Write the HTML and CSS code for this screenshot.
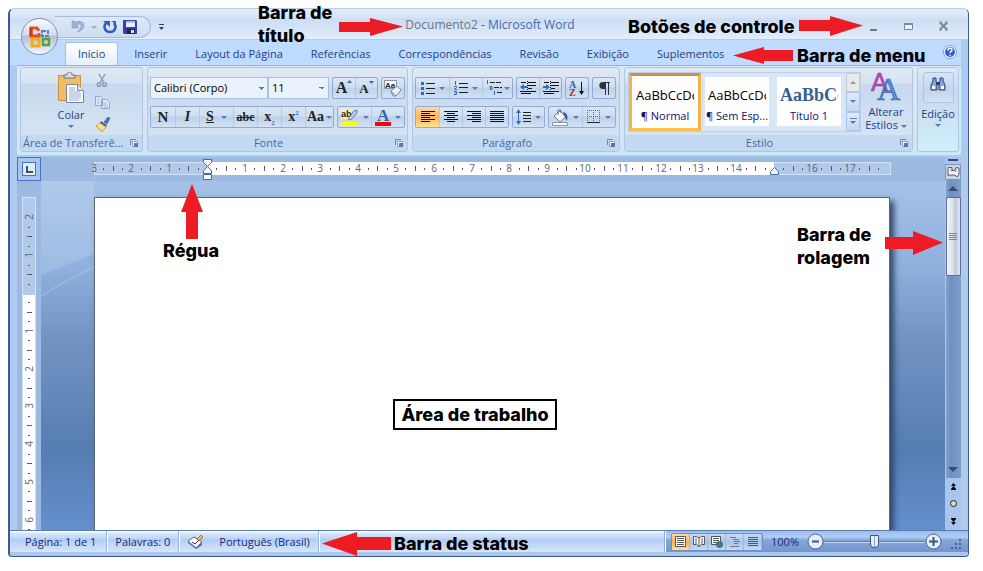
FILE: index.html
```html
<!DOCTYPE html>
<html lang="pt-BR">
<head>
<meta charset="utf-8">
<title>Documento2 - Microsoft Word</title>
<link rel="stylesheet" href="styles.css">
</head>
<body>
<div class="window">
  <header class="titlebar">
    <div class="quick-area">
    <div class="quick">
      <button aria-label="Desfazer"><svg width="14" height="14" viewBox="0 0 14 14"><path d="M1 1v7h6V6H5c2-3 6-2 5 1-1 2-2 3-4 5 5-1 7-4 7-7 0-4-6-5-9-2V1z" fill="#9db1d3" stroke="#8399c2" stroke-width=".5"/></svg></button>
      <i class="caret dim"></i>
      <button aria-label="Refazer"><svg width="14" height="14" viewBox="0 0 14 14"><path d="M3 3C0 7 2 12 7 12s7-5 4-9" fill="none" stroke="#2b5fc0" stroke-width="2.600"/><path d="M0 1h7v6z" fill="#2b5fc0"/><path d="M8 1h5v3z" fill="#2b5fc0"/></svg></button>
      <button aria-label="Salvar"><svg width="14" height="14" viewBox="0 0 14 14"><path d="M0 0h13l1 1v13H1l-1-1z" fill="#3c3fa5"/><path d="M3 1h9v6H3z" fill="#e8f0ff"/><path d="M3 1h9v2H3z" fill="#a8bdf0"/><path d="M4 9h8v5H4z" fill="#1f2350"/><path d="M8 10h3v3H8z" fill="#dde4f5"/></svg></button>
    </div>
    <button class="quick-more" aria-label="Personalizar"><svg width="7" height="7" viewBox="0 0 7 7"><path d="M1 0h5v1H1zM1 3h5L3.500 6z" fill="#24427a"/></svg></button>
    </div>
    <h1><span>Documento2</span> - Microsoft Word</h1>
    <div class="controls">
      <button aria-label="Minimizar"><svg width="9" height="10" viewBox="0 0 9 10"><path d="M1 8h7v2H1z" fill="#6f7680"/></svg></button>
      <button aria-label="Maximizar"><svg width="9" height="10" viewBox="0 0 9 10"><path d="M.5 2.500h8v6h-8z" fill="#eef4fb" stroke="#7d8794"/><path d="M0 2h9v2H0z" fill="#7d8794"/></svg></button>
      <button aria-label="Fechar"><svg width="9" height="10" viewBox="0 0 9 10"><path d="M1 1.500l7 7M8 1.500l-7 7" stroke="#7d8794" stroke-width="2"/><path d="M0 1h3M6 1h3M0 9h3M6 9h3" stroke="#7d8794"/></svg></button>
    </div>
  </header>
  <button class="office" aria-label="Botão Office">
    <svg width="24" height="24" viewBox="0 0 24 24" fill="none"><path d="M10 3H3v8h3M10 3v3M6 11h5V8" stroke="#e2521a" stroke-width="3"/><path d="M3 3v8" stroke="#c93b16" stroke-width="3"/><path d="M14 6h6v5h-6z" stroke="#4d83cf" stroke-width="2" stroke-dasharray="4 1"/><path d="M4 14h7v7H4z" stroke="#f3ac18" stroke-width="3"/><path d="M15 14h6v6h-6z" stroke="#55a33c" stroke-width="2.500"/></svg>
  </button>
  <nav class="tabs" aria-label="Menu">
    <button class="active">Início</button><button>Inserir</button><button>Layout da Página</button><button>Referências</button><button>Correspondências</button><button>Revisão</button><button>Exibição</button><button>Suplementos</button>
    <button class="help" aria-label="Ajuda"><svg width="14" height="14" viewBox="0 0 14 14"><circle cx="7" cy="7" r="6.500" fill="#fff" stroke="#7c97cc"/><circle cx="7" cy="7" r="5" fill="#2963d3"/><path d="M5 5.500c0-3 4-3 4-.5 0 1.500-2 1.500-2 3M7 9.500v1.300" stroke="#fff" stroke-width="1.500" fill="none"/></svg></button>
  </nav>
  <section class="ribbon">
    <div class="group clip">
      <div class="body">
        <button class="big">
          <svg width="28" height="32" viewBox="0 0 28 32"><path d="M1.500 3.500h22v25h-22z" fill="#efbd68" stroke="#c99245"/><path d="M7 6V3h3c0-4 5-4 5 0h3v3z" fill="#d9dde3" stroke="#6d747d"/><path d="M9.500 12.500h11l6 6v12h-17z" fill="#fff" stroke="#7486a8"/><path d="M20.500 12.500v6h6" fill="#dce6f5" stroke="#7486a8"/><path d="M12 16h6M12 18h6M12 20h11M12 22h12M12 24h12M12 26h12M12 28h10" stroke="#9badd0"/></svg>
          <span>Colar</span><i class="caret"></i>
        </button>
        <div class="stack">
          <button aria-label="Recortar"><svg width="15" height="15" viewBox="0 0 15 15" fill="none" stroke="#8c9fbf" stroke-width="1.500"><path d="M4 1l5 9M10 1L5 10"/><circle cx="4" cy="11.500" r="1.800"/><circle cx="9.500" cy="11.500" r="1.800"/></svg></button>
          <button aria-label="Copiar"><svg width="15" height="13" viewBox="0 0 15 13"><path d="M.5.500h5l2 2v7h-7zM6.500 3.500h5l3 3v6h-8z" fill="#e3ebf8" stroke="#92a6cb"/><path d="M2 3h3M2 5h3M2 7h3M8 7h4M8 9h5M8 11h5" stroke="#a9b9d8"/></svg></button>
          <button aria-label="Pincel"><svg width="16" height="15" viewBox="0 0 16 15"><path d="M9 5l4-5 2 1-3 6z" fill="#4d6fb6" stroke="#31508c" stroke-width=".5"/><path d="M6 4l6 4-1 2-6-4z" fill="#555d78"/><path d="M5 6l6 4-4 5-6-6z" fill="#f3d47a" stroke="#b38b33" stroke-width=".7"/><path d="M3 8l5 4M4 7l5 4" stroke="#fff2ad"/></svg></button>
        </div>
      </div>
      <footer><span>Área de Transferê...</span><svg class="launch" viewBox="0 0 8 8"><use href="#launcher"/></svg></footer>
    </div>
    <div class="group font">
      <div class="body rows">
        <div class="row">
          <div class="combos"><select aria-label="Fonte" class="family"><option>Calibri (Corpo)</option></select><select aria-label="Tamanho" class="size"><option>11</option></select></div>
          <div class="set"><button aria-label="Aumentar fonte" class="serif grow">A<svg width="5" height="3" viewBox="0 0 5 3"><path d="M0 3h5L2.500 0z" fill="#3768b5"/></svg></button><button aria-label="Diminuir fonte" class="serif shrink">A<svg width="5" height="3" viewBox="0 0 5 3"><path d="M0 0h5L2.500 3z" fill="#3768b5"/></svg></button></div>
          <div class="set"><button aria-label="Limpar formatação"><svg width="18" height="17" viewBox="0 0 18 17"><path d="M.5.500h12v8H.5z" fill="#fff" stroke="#8795ad"/><text x="1" y="8" font-family="Liberation Sans" font-size="8" font-weight="bold" fill="#222">Aa</text><path d="M7 11l6-5 4 4-5 6H9z" fill="#eef1f7" stroke="#7888a6"/><path d="M7 11l5 5" stroke="#7888a6"/></svg></button></div>
        </div>
        <div class="row">
          <div class="set fmt"><button class="serif"><b>N</b></button><button class="serif"><em>I</em></button><button class="serif wide"><u>S</u><i class="caret"></i></button><button class="serif small"><s>abc</s></button><button class="serif"><span>x<sub>2</sub></span></button><button class="serif"><span>x<sup>2</sup></span></button><button class="serif case">Aa<i class="caret"></i></button></div>
          <div class="set"><button class="wide" aria-label="Realce"><svg width="18" height="18" viewBox="0 0 18 18"><path d="M0 1h11v10H0z" fill="#fff29a"/><text x="0" y="9" font-family="Liberation Sans" font-size="9" font-weight="bold" fill="#222">ab</text><path d="M7 11l6-8 3-1v3l-6 7z" fill="#b9cde9" stroke="#526a96" stroke-width=".8"/><path d="M0 14h16v4H0z" fill="#ff0"/></svg><i class="caret"></i></button><button class="wide" aria-label="Cor da fonte"><svg width="16" height="18" viewBox="0 0 16 18"><text x="2" y="13" font-family="Liberation Serif" font-size="17" font-weight="bold" fill="#3662a7">A</text><path d="M0 14h16v4H0z" fill="red"/></svg><i class="caret"></i></button></div>
        </div>
      </div>
      <footer><span>Fonte</span><svg class="launch" viewBox="0 0 8 8"><use href="#launcher"/></svg></footer>
    </div>
    <div class="group para">
      <div class="body rows">
        <div class="row">
          <div class="set lists">
            <button class="wide" aria-label="Marcadores"><svg width="14" height="13" viewBox="0 0 14 13"><path d="M5 1.500h9M5 6.500h9M5 11.500h9" stroke="#222"/><path d="M0 0h3v3H0zM0 5h3v3H0zM0 10h3v3H0z" fill="#3b66b2"/></svg><i class="caret"></i></button><button class="wide" aria-label="Numeração"><svg width="14" height="14" viewBox="0 0 14 14"><path d="M5 2.500h9M5 6.500h9M5 11.500h9" stroke="#222"/><path d="M1.500 0v4M0 5.500h2.500v1L.5 8.500H3M0 10.500h2.500v3H0M1 12h1" fill="none" stroke="#3b66b2"/></svg><i class="caret"></i></button><button class="wide" aria-label="Vários níveis"><svg width="16" height="16" viewBox="0 0 16 16"><path d="M4 2.500h12M8 7.500h8M11 12.500h5" stroke="#222" stroke-dasharray="5 1"/><path d="M1.500 0v4M4 6.500h2v3H4.500zM8.500 11v4" fill="none" stroke="#3b66b2"/></svg><i class="caret"></i></button></div>
          <div class="set">
            <button aria-label="Diminuir recuo"><svg width="16" height="14" viewBox="0 0 16 14"><path d="M1 1.500h5M8 1.500h8M8 4.500h8M8 7.500h4M0 10.500h16M1 12.500h10" stroke="#111"/><path d="M7.500 0v14" stroke="#111" stroke-dasharray="1 1"/><path d="M0 6l4-3v2h3v2H4v2z" fill="#3969bd"/></svg></button><button aria-label="Aumentar recuo"><svg width="16" height="14" viewBox="0 0 16 14"><path d="M1 1.500h5M8 1.500h8M8 4.500h8M8 7.500h4M0 10.500h16M1 12.500h10" stroke="#111"/><path d="M7.500 0v14" stroke="#111" stroke-dasharray="1 1"/><path d="M7 6L3 3v2H0v2h3v2z" fill="#3969bd"/></svg></button></div>
          <div class="set"><button aria-label="Classificar"><svg width="16" height="17" viewBox="0 0 16 17"><text x="0" y="8" font-family="Liberation Serif" font-size="10" font-weight="bold" fill="#3662a7">A</text><text x="0" y="16" font-family="Liberation Serif" font-size="10" font-weight="bold" fill="#a3342e">Z</text><path d="M12.500 2v11" stroke="#111"/><path d="M10 11h5l-2.500 4z" fill="#111"/></svg></button></div>
          <div class="set"><button aria-label="Mostrar marcas"><svg width="11" height="13" viewBox="0 0 11 13"><path d="M5 .5h6M6.500 0v13M9.500 0v13" stroke="#2b3140"/><path d="M6 0H4c-5 0-5 7 0 7h2z" fill="#2b3140"/></svg></button></div>
        </div>
        <div class="row">
          <div class="set align"><button class="on" aria-label="À esquerda"><svg width="14" height="12" viewBox="0 0 14 12"><path d="M0 .5h14M0 2.500h9M0 4.500h14M0 6.500h9M0 8.500h14M0 10.500h9" stroke="#111"/></svg></button><button aria-label="Centralizar"><svg width="14" height="12" viewBox="0 0 14 12"><path d="M0 .5h14M3 2.500h8M0 4.500h14M3 6.500h8M0 8.500h14M3 10.500h8" stroke="#111"/></svg></button><button aria-label="À direita"><svg width="14" height="12" viewBox="0 0 14 12"><path d="M0 .5h14M5 2.500h9M0 4.500h14M5 6.500h9M0 8.500h14M5 10.500h9" stroke="#111"/></svg></button><button aria-label="Justificar"><svg width="14" height="12" viewBox="0 0 14 12"><path d="M0 .5h14M0 2.500h14M0 4.500h14M0 6.500h14M0 8.500h14M0 10.500h14" stroke="#111"/></svg></button></div>
          <div class="set"><button class="spacing" aria-label="Espaçamento"><svg width="15" height="16" viewBox="0 0 15 16"><path d="M7 3.500h8M7 6.500h8M7 9.500h8M7 12.500h8" stroke="#222"/><path d="M2.500 3v10" stroke="#3969bd"/><path d="M0 4h5L2.500 0zM0 12h5l-2.500 4z" fill="#3969bd"/></svg><i class="caret"></i></button></div>
          <div class="set"><button class="wide" aria-label="Sombreamento"><svg width="17" height="17" viewBox="0 0 17 17"><path d="M2 7l6-5 6 6-6 5z" fill="#f5f7fb" stroke="#67758f"/><path d="M6 6V1h3v3" fill="none" stroke="#67758f"/><path d="M11 3c5 1 5 5 4 9l-3-5z" fill="#3a63ad"/><path d="M.5 13.500h15v3H.5z" fill="#fff" stroke="#8a94a6"/></svg><i class="caret"></i></button><button class="wide" aria-label="Bordas"><svg width="14" height="14" viewBox="0 0 14 14"><path d="M0 .5h13M0 6.500h13M.5 0v12M6.500 0v12M12.500 0v12" stroke="#56668a" stroke-dasharray="1 1"/><path d="M0 12.500h13" stroke="#222"/></svg><i class="caret"></i></button></div>
        </div>
      </div>
      <footer><span>Parágrafo</span><svg class="launch" viewBox="0 0 8 8"><use href="#launcher"/></svg></footer>
    </div>
    <div class="group styles">
      <div class="body">
        <div class="gallery">
          <button class="style chosen"><span class="sample">AaBbCcDc</span><span>¶ Normal</span></button>
          <button class="style"><span class="sample">AaBbCcDc</span><span>¶ Sem Esp...</span></button>
          <button class="style"><span class="sample heading">AaBbCc</span><span>Título 1</span></button>
          <div class="spin"><button class="off" aria-label="Acima"><i class="caret up"></i></button><button aria-label="Abaixo"><i class="caret"></i></button><button aria-label="Mais"><i class="bar"></i><i class="caret"></i></button></div>
        </div>
        <button class="big change"><svg width="30" height="29" viewBox="0 0 30 29"><text x="0" y="19" font-family="Liberation Sans" font-size="25" fill="#bd4fb8" stroke="#8d3791" stroke-width=".6">A</text><text x="6" y="28" font-family="Liberation Serif" font-size="32" fill="#5b91d9" stroke="#315fa7" stroke-width=".7">A</text></svg><span>Alterar</span><span>Estilos <i class="caret"></i></span></button>
      </div>
      <footer><span>Estilo</span><svg class="launch" viewBox="0 0 8 8"><use href="#launcher"/></svg></footer>
    </div>
    <div class="group edit">
      <button class="big"><span class="tile"><svg width="16" height="15" viewBox="0 0 16 15"><path d="M3 1h3v3l1 2v7H1V8l2-4zM10 1h3v3l2 4v5H9V6l1-2z" fill="#8ca7d4" stroke="#26427c"/><path d="M6 5h4v3H6z" fill="#26427c"/><path d="M2 9h3v3H2zM11 9h3v3h-3z" fill="#fff"/></svg></span><span>Edição</span><i class="caret"></i></button>
    </div>
  </section>
  <main class="workspace">
    <button class="tabstop" aria-label="Tabulação"><span><svg width="7" height="7" viewBox="0 0 7 7"><path d="M1 0v6h6" fill="none" stroke="#40506f" stroke-width="2"/></svg></span></button>
    <div class="hruler"><svg id="hruler" width="797" height="24" viewBox="0 0 797 24"></svg></div>
    <div class="vruler"><svg id="vruler" width="14" height="340" viewBox="0 0 14 340"></svg></div>
    <div class="canvas"><svg class="swoosh" viewBox="0 0 53 120" width="53" height="120"><path d="M0 0H53V73Q25 84 0 94z" fill="#cfe0f5" opacity=".25"/><path d="M0 115Q25 99 53 86" stroke="#b5cdef" fill="none" opacity=".7"/></svg><article class="page"><p>Área de trabalho</p></article></div>
    <div class="scroll">
      <i class="split"></i>
      <button class="toggle" aria-label="Régua"><svg width="13" height="12" viewBox="0 0 13 12"><path d="M1 9.500v-8h4v3h3l1-3 3 .5v6l-2 3-2-2H3z" fill="#f7f9fd" stroke="#505b75"/><path d="M3 3l2 3M8 6l2-3" stroke="#505b75" stroke-dasharray="1 1"/></svg></button>
      <div class="track"><button aria-label="Acima"><i class="arrow up"></i></button><div class="thumb"></div><button class="down" aria-label="Abaixo"><i class="arrow"></i></button></div>
      <div class="browse">
        <button aria-label="Página anterior"><svg width="7" height="7" viewBox="0 0 7 7"><path d="M1 3h5L3.500 0zM1 6h5L3.500 3zM1 6h5v1H1z"/></svg></button>
        <button aria-label="Procurar"><svg width="7" height="7" viewBox="0 0 7 7"><circle cx="3.500" cy="3.500" r="3" fill="#ddd6c8" stroke="#222"/></svg></button>
        <button aria-label="Próxima página"><svg width="7" height="7" viewBox="0 0 7 7"><path d="M1 0h5v1H1zM1 1h5L3.500 4zM1 4h5L3.500 7z"/></svg></button>
      </div>
    </div>
  </main>
  <footer class="status">
    <span class="cell first">Página: 1 de 1</span><span class="cell">Palavras: 0</span>
    <span class="cell"><svg width="17" height="15" viewBox="0 0 17 15"><path d="M1 7l6-4 8 5-6 6z" fill="#fff" stroke="#56678d"/><path d="M1 8l8 6 6-5v2l-6 4-8-6z" fill="#4565a8"/><path d="M5 8l3 2 7-7" fill="none" stroke="#333"/><path d="M10 5l4-4 2 2-4 4z" fill="#f0b35a" stroke="#7a5425" stroke-width=".6"/></svg><span class="lang">Português (Brasil)</span></span>
    <div class="view">
      <div class="modes">
        <button class="on" aria-label="Impressão"><svg width="11" height="11" viewBox="0 0 11 11"><path d="M.5.500h10v10H.5z" fill="#fff" stroke="#555"/><path d="M2 2.500h7M2 4.500h7M2 6.500h7M2 8.500h7" stroke="#555"/></svg></button>
        <button aria-label="Leitura"><svg width="12" height="11" viewBox="0 0 12 11"><path d="M.5.500h3L6 2l2.500-1.500h3v8h-3L6 10.500 3.500 8.500h-3z" fill="#fff" stroke="#555"/><path d="M6 2v9M2 3h2M2 5h2M2 7h2M8 3h2M8 5h2M8 7h2" stroke="#555"/></svg></button>
        <button aria-label="Web"><svg width="12" height="12" viewBox="0 0 12 12"><path d="M.5.500h9v8h-9z" fill="#fff" stroke="#555"/><path d="M2 2.500h6M2 4.500h6M2 6.500h4" stroke="#555"/><circle cx="8.500" cy="8.500" r="3" fill="#3a8a5c" stroke="#2a5e96"/></svg></button>
        <button aria-label="Tópicos"><svg width="10" height="10" viewBox="0 0 10 10"><path d="M0 .5h6M3 2.500h6M4 4.500h6M4 6.500h4M0 9.500h9" stroke="#777"/></svg></button>
        <button aria-label="Rascunho"><svg width="10" height="10" viewBox="0 0 10 10"><path d="M0 .5h10M0 2.500h10M0 4.500h10M0 6.500h10M0 8.500h10" stroke="#555"/></svg></button>
      </div>
      <span class="pct">100%</span>
      <button class="round" aria-label="Reduzir"><svg width="17" height="17" viewBox="0 0 17 17"><circle cx="8.500" cy="8.500" r="7.500" fill="#e7eefb" stroke="#4a6391"/><path d="M5 8.500h7" stroke="#41557e" stroke-width="2"/></svg></button>
      <input type="range" min="0" max="200" value="100" aria-label="Zoom">
      <button class="round" aria-label="Ampliar"><svg width="17" height="17" viewBox="0 0 17 17"><circle cx="8.500" cy="8.500" r="7.500" fill="#e7eefb" stroke="#4a6391"/><path d="M4 8.500h9M8.500 4v9" stroke="#41557e" stroke-width="2"/></svg></button>
      <svg class="grip" width="11" height="11" viewBox="0 0 11 11"><path d="M8 0h2v2H8zM4 4h2v2H4zM8 4h2v2H8zM0 8h2v2H0zM4 8h2v2H4zM8 8h2v2H8z" fill="#47659b"/></svg>
    </div>
  </footer>
</div>

<div class="note n-title">Barra de<br>título</div>
<svg class="red a-title" width="64" height="18" viewBox="0 0 64 18"><path d="M0 4h31V0l33 8.500L31 18v-4H0z"/></svg>
<div class="note n-controls">Botões de controle</div>
<svg class="red a-controls" width="64" height="20" viewBox="0 0 64 20"><path d="M0 4h31V0l33 9.500L31 20v-5H0z"/></svg>
<svg class="red a-menu" width="60" height="17" viewBox="0 0 60 17"><path d="M60 3H31V0L0 8.500 31 17v-3h29z"/></svg>
<div class="note n-menu">Barra de menu</div>
<svg class="red a-ruler" width="22" height="55" viewBox="0 0 22 55"><path d="M5 55V28H0L11 0l11 28h-5v27z"/></svg>
<div class="note n-ruler">Régua</div>
<div class="note n-scroll">Barra de<br>rolagem</div>
<svg class="red a-scroll" width="58" height="24" viewBox="0 0 58 24"><path d="M0 6h28V0l30 11.500L28 24v-6H0z"/></svg>
<svg class="red a-status" width="69" height="24" viewBox="0 0 69 24"><path d="M69 5H35V0L0 11.500 35 24v-6h34z"/></svg>
<div class="note n-status">Barra de status</div>

<svg class="defs" width="0" height="0"><symbol id="launcher" viewBox="0 0 8 8"><path d="M.5 6V.5H6" fill="none" stroke="#6b87b5"/><path d="M2.500 2.500h5v5h-5z" fill="#fff" stroke="#89a2cb"/><path d="M4 4h4v4H4z" fill="#5b78aa"/></symbol></svg>
<script src="rulers.js"></script>
</body>
</html>
```
FILE: rulers.js
```js
const UNIT = 37.8;
const QUARTER = UNIT / 4;

function marks(zero, from, to, skip, draw) {
  let out = '';
  for (let q = from * 4; q <= to * 4; q++) {
    if (skip.includes(q)) continue;
    const at = Math.round(zero + q * QUARTER);
    const kind = q % 4 === 0 ? 'num' : q % 2 === 0 ? 'bar' : 'dot';
    out += draw(at, kind, Math.abs(q / 4));
  }
  return out;
}

document.getElementById('hruler').innerHTML =
  '<rect x="0.5" y="5.500" width="796" height="12" fill="#b1c9eb" stroke="#d3e2f6"/>' +
  '<rect x="113" y="5" width="567" height="13" fill="#fff"/>' +
  marks(113, -3, 17.75, [0, 60], (x, kind, n) =>
    kind === 'num' ? `<text x="${x}" y="15" text-anchor="middle">${n}</text>`
    : kind === 'bar' ? `<path d="M${x} 9v5h1V9z"/>`
    : `<path d="M${x} 11h1v2h-1z"/>`) +
  '<g fill="#f4f8fe" stroke="#4668a8"><path d="M109.500 2.500h8v3l-4 4-4-4zM109.500 16.500v-3l4-4 4 4v3zM109.500 17.500h8v5h-8z"/><path d="M676.500 17.500v-3l4-4 4 4v3z"/></g>';

document.getElementById('vruler').innerHTML =
  '<rect x="0.5" y="0.5" width="13" height="345" fill="#b1c9eb" stroke="#d3e2f6"/>' +
  '<rect x="1" y="98" width="12" height="242" fill="#fff"/>' +
  marks(96, -2, 6.25, [0], (y, kind, n) =>
    kind === 'num' ? `<text transform="translate(11 ${y}) rotate(-90)" text-anchor="middle">${n}</text>`
    : kind === 'bar' ? `<path d="M5 ${y}h5v1H5z"/>`
    : `<path d="M6 ${y}h2v1H6z"/>`);
```
FILE: styles.css
```css
* { box-sizing: border-box; }
body {
  margin: 0;
  padding: 8px 14px 14px 8px;
  background: #fff;
  font: 11px/16px "Open Sans", "Noto Sans", sans-serif;
  color: #1e3f84;
}
button, select {
  border: 0;
  padding: 0;
  margin: 0;
  background: none;
  color: inherit;
  font: inherit;
}
svg { display: block; flex: none; }
.defs { position: absolute; }

.window {
  position: relative;
  display: flex;
  flex-direction: column;
  height: calc(100vh - 22px);
  min-height: 400px;
  border: 1px solid #3b5a8f;
  border-top-color: #b9cbe6;
  border-left-width: 2px;
  border-radius: 6px 6px 4px 4px;
  background: #b0c9ee;
  overflow: hidden;
}

.titlebar {
  display: grid;
  grid-template-columns: 1fr auto 1fr;
  align-items: center;
  height: 31px;
  padding-left: 2px;
  background: linear-gradient(#e3ecf9, #d6e3f6 30%, #cbdcf4 32%, #dce9fa 85%, #e4effc);
  border-bottom: 1px solid #b2cbed;
}
.quick-area { display: flex; align-items: center; padding-left: 43px; }
.quick {
  display: flex;
  align-items: center;
  gap: 6px;
  width: 96px;
  height: 22px;
  margin-top: 6px;
  padding-left: 16px;
  border: 1px solid #a3bbdf;
  border-left: 0;
  border-radius: 0 12px 12px 0;
  background: linear-gradient(#dfe9f8, #ccdcf3);
}
.quick-more { margin: 6px 0 0 7px; }
.titlebar h1 {
  margin: 0;
  padding-top: 2px;
  font-size: 12px;
  font-weight: 400;
  color: #4568a7;
}
.titlebar h1 span { color: #6d7580; }
.controls { display: flex; justify-content: flex-end; gap: 26px; padding: 3px 20px 0 0; }
.office {
  position: absolute;
  left: 11px;
  top: 9px;
  z-index: 2;
  display: grid;
  place-items: center;
  width: 37px;
  height: 37px;
  border: 1px solid #7f90b0;
  border-radius: 50%;
  background: linear-gradient(#fbfcfe, #d3dbea 45%, #b4c0d8 50%, #f3f7fd);
}

.tabs {
  display: flex;
  align-items: flex-end;
  gap: 4px;
  height: 25px;
  padding: 0 4px 0 55px;
  margin-right: 7px;
  background: #bfdbff;
}
.tabs button { height: 23px; padding: 0 12px; white-space: nowrap; }
.tabs .active {
  border: 1px solid #a3c0ea;
  border-bottom: 0;
  border-radius: 3px 3px 0 0;
  background: linear-gradient(#fff, #e4effc);
}
.tabs .help { margin-left: auto; padding: 0 0 3px; }

.ribbon {
  display: flex;
  gap: 4px;
  height: 90px;
  padding: 1px 1px 2px 2px;
  margin: 0 7px 2px;
  border: 1px solid #8db2e3;
  border-color: #8db2e3 #c3f1ff #c3f1ff;
  border-radius: 3px;
  background: linear-gradient(#dbe8f8, #d3e3f5);
}
.group {
  display: flex;
  flex-direction: column;
  border: 1px solid #b1c6e1;
  border-radius: 3px;
  background: linear-gradient(#dfe9f5, #d6e3f2 18%, #c8d9ee 20%, #d9e7f6);
  overflow: hidden;
}
.clip { flex: 0 0 123px; }
.font { flex: 0 0 261px; }
.para { flex: 0 0 208px; }
.styles { flex: 1 1 290px; }
.edit { flex: 0 0 42px; }
.group .body { display: flex; flex: 1; min-height: 0; }
.group footer {
  display: flex;
  align-items: center;
  height: 16px;
  padding: 0 4px 0 2px;
  background: #c2d9f1;
  color: #4268ab;
  white-space: nowrap;
}
.group footer span { flex: 1; padding-right: 8px; text-align: center; }
.clip footer span { padding: 0; text-align: left; }
.launch { width: 8px; height: 8px; }
.caret {
  display: inline-block;
  flex: none;
  width: 0;
  height: 0;
  border: 3px solid transparent;
  border-top-color: #567db1;
  border-bottom: 0;
  vertical-align: middle;
}
.caret.up { border: 3px solid transparent; border-top: 0; border-bottom-color: #999; }
.caret.dim { border-top-color: #a9a9a9; }

.big { display: flex; flex-direction: column; align-items: center; line-height: 13px; }
.clip .body { padding: 4px 0 0 36px; gap: 10px; }
.clip .big span { margin: 4px 0 4px; }
.stack { display: flex; flex-direction: column; gap: 8px; padding: 1px 0; }
.rows { flex-direction: column; gap: 7px; padding: 9px 2px 0; }
.row { display: flex; gap: 3px; }
.set, .combos { display: flex; height: 22px; }
.set {
  border: 1px solid #8fabd6;
  border-radius: 2px;
  background: linear-gradient(#dae6f5, #cfdef1 45%, #bdd1eb 50%, #d3e2f5);
}
.set button {
  display: flex;
  align-items: center;
  justify-content: center;
  gap: 4px;
  width: 22px;
}
.set button + button { border-left: 1px solid #b4c8e5; }
.set .wide { width: 33px; }
.lists .wide:last-child { width: 30px; gap: 2px; }
.set .spacing { width: 31px; }
.align button { width: 23px; }
.fmt button { width: 24px; }
.combos select {
  appearance: none;
  padding: 0 3px;
  border: 1px solid #abc1de;
  color: #000;
  background: #eaf2fb linear-gradient(45deg, transparent 50%, #567db1 50%) no-repeat right 6px top 9px / 3px 3px;
  background-image: linear-gradient(45deg, transparent 50%, #567db1 50%), linear-gradient(-45deg, transparent 50%, #567db1 50%);
  background-position: right 6px top 9px, right 3px top 9px;
}
.family { width: 118px; }
.size { width: 61px; }
.serif { font-family: "Liberation Serif", serif; font-size: 14px; font-weight: 700; color: #222; }
.serif b { font-size: 15px; }
.set .small { font-size: 12px; }
.fmt .serif.wide { width: 34px; gap: 7px; }
.fmt .case.serif { width: 28px; gap: 2px; }
.set .grow { font-size: 16px; gap: 0; align-items: flex-start; padding-top: 2px; }
.set .shrink { font-size: 13px; gap: 0; align-items: flex-start; padding-top: 3px; }
sub, sup { font-size: 7px; line-height: 0; color: #3768b5; }
.align .on { background: linear-gradient(#fbdba6, #fbb65a 50%, #ffe28f); }

.styles .body { padding: 4px 3px; gap: 2px; }
.gallery {
  display: flex;
  flex: 1;
  height: 60px;
  border: 1px solid #b9cfea;
  background: #d8e6f6;
}
.style {
  display: flex;
  flex: 1;
  flex-direction: column;
  align-items: center;
  justify-content: flex-end;
  min-width: 0;
  margin: 4px 4px 5px;
  padding-bottom: 2px;
  background: #fff;
  overflow: hidden;
  white-space: nowrap;
  color: #10106a;
}
.style.chosen {
  flex: 1 0 8px;
  margin: 0;
  padding-bottom: 4px;
  border: 3px solid #f3b14c;
  border-color: #d18b4b #f5b34a #fbc34c;
}
.sample { width: 58px; overflow: hidden; font: 13px/26px "Open Sans", sans-serif; color: #000; }
.sample.heading { font: 700 18px/26px "Liberation Serif", serif; color: #366092; }
.spin { display: flex; flex-direction: column; width: 14px; margin-left: 1px; }
.spin button {
  display: flex;
  flex: 1;
  flex-direction: column;
  gap: 2px;
  align-items: center;
  justify-content: center;
  border: 1px solid #abc4e6;
  background: linear-gradient(#dfebfa, #c4d8f1);
}
.spin .off { background: #e9e9e9; border-color: #ccc; }
.bar { width: 7px; height: 1px; background: #567db1; }
.change { width: 46px; }
.change svg { margin-bottom: 4px; }
.edit { background: linear-gradient(#dfe9f5, #c8d9ee 30%, #d0f0fa); }
.edit .big { padding-top: 4px; }
.tile {
  display: grid;
  place-items: center;
  width: 31px;
  height: 31px;
  margin-bottom: 4px;
  padding-bottom: 6px;
  border: 1px solid #adc3e2;
  border-radius: 3px;
  background: linear-gradient(#d7e4f4, #c4d6ee 60%, #d3e1f2);
}
.edit .big .caret { margin-top: 4px; }

.workspace {
  display: grid;
  grid-template-columns: 24px 1fr 16px;
  grid-template-rows: 24px 1fr;
  flex: 1;
  min-height: 0;
  margin: 0 7px;
  background: #9bb9e1;
}
.tabstop { display: grid; place-items: center; border: 1px solid #4573cb; background: #a9c5ec; }
.tabstop span { display: grid; place-items: center; width: 14px; height: 14px; border: 1px solid #4573cb; background: #e3ecf9; }
.hruler { display: flex; justify-content: center; min-width: 0; padding-right: 2px; overflow: hidden; }
.hruler svg { overflow: visible; }
.vruler { padding: 16px 0 0 5px; overflow: hidden; min-height: 0; }
#hruler text, #vruler text { font: 10px "Open Sans", sans-serif; fill: #5b6577; }
#hruler path, #vruler path { fill: #4d5a70; }
#hruler g path { fill: #f4f8fe; }
.canvas {
  position: relative;
  padding: 16px 2px 0 0;
  min-height: 0;
  overflow: hidden;
  background: linear-gradient(#a5c2e8, #8fb0dd 25%, #7294c4 45%, #567db1 77%, #6590cf);
}
.swoosh { position: absolute; left: 0; top: 0; }
.page {
  position: relative;
  display: flex;
  justify-content: center;
  width: calc(100% - 106px);
  height: 100%;
  margin: 0 auto;
  padding-top: 201px;
  border: 1px solid #5f6670;
  border-bottom: 0;
  background: #fff;
  box-shadow: 4px 4px 6px #33466a;
}
.page p, .note {
  margin: 0;
  font: 800 18px/23px Inter, sans-serif;
  color: #000;
  white-space: nowrap;
}
.page p { height: 31px; margin-right: 34px; padding: 2px 6px; border: 2px solid #000; }

.scroll {
  grid-column: 3;
  grid-row: 1 / 3;
  display: flex;
  flex-direction: column;
  align-items: center;
  padding-top: 2px;
  background: #a9c5ee;
}
.split { width: 10px; height: 2px; background: #3d4b73; }
.toggle { display: grid; place-items: center; width: 16px; height: 16px; margin-top: 3px; border: 1px solid #8594b5; background: #cdd3e0; }
.track { display: flex; flex: 1; flex-direction: column; width: 15px; background: linear-gradient(90deg, #84a2cc, #6f91c2 30%, #7d9dca); }
.track button { display: grid; place-items: center; height: 17px; }
.arrow { border: 5px solid transparent; border-top-color: #3d4b73; border-bottom: 0; }
.arrow.up { border: 5px solid transparent; border-top: 0; border-bottom-color: #3d4b73; }
.thumb {
  height: 79px;
  border: 1px solid #5d6f97;
  border-radius: 2px;
  background:
    repeating-linear-gradient(#7c8797 0 1px, transparent 1px 2px) center / 8px 8px no-repeat,
    linear-gradient(90deg, #f3f6fb, #d8dde7 50%, #bcc7da 60%, #dfe5ef);
}
.track .down { margin-top: auto; }
.browse { display: flex; flex-direction: column; justify-content: space-around; height: 52px; }

.status {
  display: flex;
  align-items: stretch;
  height: 26px;
  border-top: 1px solid #567db1;
  border-bottom: 4px solid #adc6ec;
  color: #15297c;
  background: linear-gradient(#fff 1px, #d7e6fb 2px, #c3d9f8 7px, #b0cdf6 8px, #d6e5fa);
  white-space: nowrap;
}
.cell { display: flex; align-items: center; padding: 0 8px; border-right: 1px solid #9ab7e2; box-shadow: 1px 0 #fff; }
.cell.first { padding: 0 10px 0 15px; }
.lang { margin-left: 15px; }
.view {
  display: flex;
  align-items: center;
  margin-left: auto;
  padding: 0 6px 0 5px;
  border-left: 1px solid #fff;
  box-shadow: -1px 0 #8cabd9;
  background: linear-gradient(#9dbdec, #b2cdf5 6px, #84a8da 9px, #7395ca);
}
.modes { display: flex; width: 92px; height: 18px; border: 1px solid #6d90c8; border-radius: 2px; background: linear-gradient(#c8dbf5, #a9c5ec 50%, #c3d8f4); }
.modes button { display: grid; place-items: center; flex: 1; border-right: 1px solid #9db9e2; }
.modes .on { background: linear-gradient(#fbdba6, #f6b04a 50%, #ffe28f); }
.pct { width: 44px; text-align: center; }
.view input {
  appearance: none;
  width: 101px;
  height: 17px;
  margin: 0;
  background: linear-gradient(#5a7cb4 1px, #c7dbf7 1px) center / 100% 2px no-repeat;
}
.view input::-webkit-slider-thumb {
  appearance: none;
  width: 9px;
  height: 13px;
  border: 1px solid #41557e;
  border-radius: 1px 1px 5px 5px;
  background: linear-gradient(90deg, #e7eefb 3px, #8da4cc 3px 4px, #e7eefb 4px);
}
.grip { margin: 6px 0 0 9px; }

.note, .red { position: absolute; z-index: 3; }
.red { fill: #ed1c24; }
.n-title { left: 258px; top: 1px; }
.a-title { left: 339px; top: 18px; }
.n-controls { left: 628px; top: 15px; }
.a-controls { left: 799px; top: 16px; }
.a-menu { left: 733px; top: 47px; }
.n-menu { left: 797px; top: 44px; }
.a-ruler { left: 181px; top: 184px; }
.n-ruler { left: 163px; top: 239px; }
.n-scroll { left: 797px; top: 223px; }
.a-scroll { left: 885px; top: 231px; }
.a-status { left: 322px; top: 532px; }
.n-status { left: 394px; top: 532px; }
```
